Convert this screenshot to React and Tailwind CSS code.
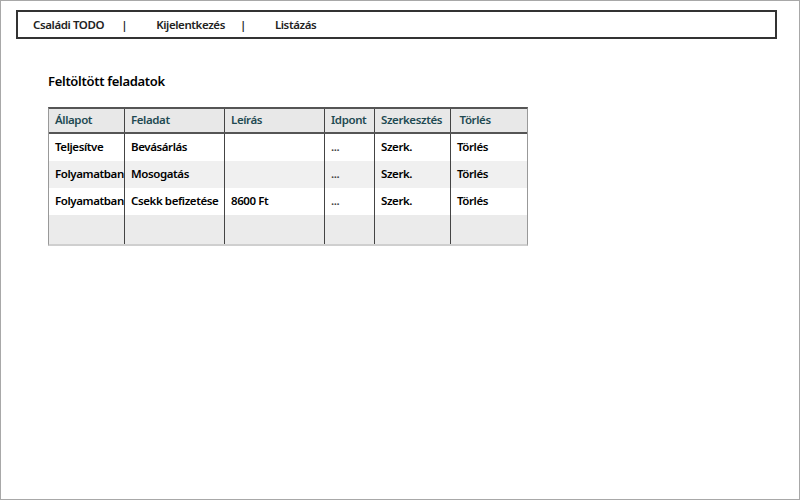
import React from 'react';

const font = { fontFamily: '"Noto Sans", sans-serif' };

const cols = [
  { title: 'Állapot', w: 'w-[76px]' },
  { title: 'Feladat', w: 'w-[100px]' },
  { title: 'Leírás', w: 'w-[100px]' },
  { title: 'Idpont', w: 'w-[50px]' },
  { title: 'Szerkesztés', w: 'w-[76px]' },
  { title: ' Törlés', w: 'flex-1' },
];

const rows = [
  ['Teljesítve', 'Bevásárlás', '', '...', 'Szerk.', 'Törlés'],
  ['Folyamatban', 'Mosogatás', '', '...', 'Szerk.', 'Törlés'],
  ['Folyamatban', 'Csekk befizetése', '8600 Ft', '...', 'Szerk.', 'Törlés'],
];

const rowBg = ['bg-white', 'bg-[#f0f0f0]', 'bg-white'];

const App = () => {
  return (
    <div className="w-[800px] h-[500px] bg-white border border-[#a8a8a8] pt-[9px] px-[15px] text-[11.5px] tracking-[-0.4px] font-semibold text-[#222]" style={font}>
      {/* Top nav */}
      <div className="w-[761px] h-[29px] border-2 border-[#333] flex items-center pl-[15px]">
        <span>Családi TODO</span>
        <span className="ml-[17px]">|</span>
        <span className="ml-[29px]">Kijelentkezés</span>
        <span className="ml-[15px]">|</span>
        <span className="ml-[29px]">Listázás</span>
      </div>

      <div className="pl-[32px] pt-[33px]">
        <div className="text-[13px] tracking-[-0.3px] text-black">Feltöltött feladatok</div>

        {/* Table */}
        <div className="mt-[15px] w-[480px] border-t-2 border-t-[#555] border-x border-x-[#999] border-b-2 border-b-[#cfcfcf]">
          <div className="flex h-[25px] bg-[#e8e8e8] border-b-2 border-b-[#555] text-[#1f4a52]">
            {cols.map((c, i) => (
              <div key={i} className={`${c.w} ${i < cols.length - 1 ? 'border-r border-r-[#444]' : ''} flex items-center pl-[6px] whitespace-pre`}>
                {c.title}
              </div>
            ))}
          </div>
          {rows.map((r, ri) => (
            <div key={ri} className={`flex h-[27px] ${rowBg[ri]} text-black`}>
              {r.map((cell, i) => (
                <div key={i} className={`${cols[i].w} ${i < cols.length - 1 ? 'border-r border-r-[#444]' : ''} flex items-center pl-[6px] whitespace-nowrap ${i === 3 ? 'text-[#444]' : ''}`}>
                  {cell}
                </div>
              ))}
            </div>
          ))}
          <div className="flex h-[29px] bg-[#ebebeb]">
            {cols.map((c, i) => (
              <div key={i} className={`${c.w} ${i < cols.length - 1 ? 'border-r border-r-[#444]' : ''}`} />
            ))}
          </div>
        </div>
      </div>
    </div>
  );
};

export default App;
